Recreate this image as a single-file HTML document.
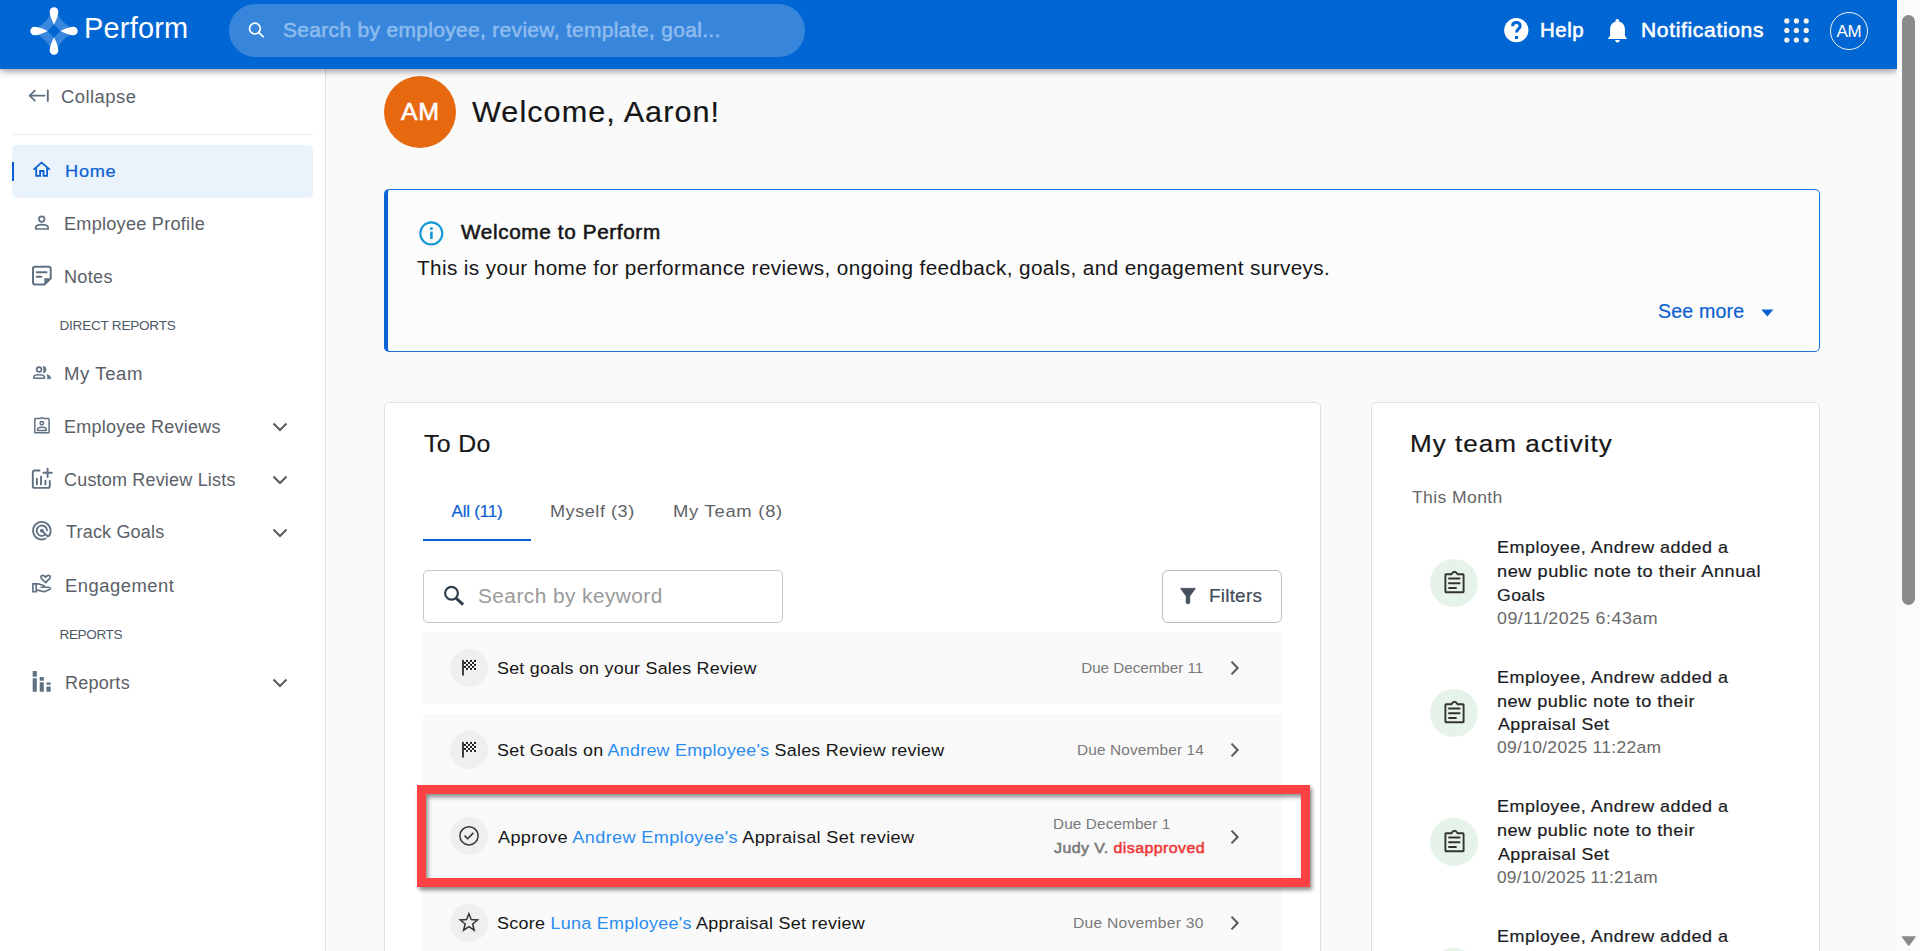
<!DOCTYPE html>
<html><head><meta charset="utf-8"><title>Perform</title>
<style>
html,body{margin:0;padding:0;width:1920px;height:951px;overflow:hidden;background:#fafafa;font-family:"Liberation Sans",sans-serif}
.a{position:absolute;box-sizing:border-box}
svg.a{overflow:visible}
.t{position:absolute;white-space:pre}
.m{-webkit-text-stroke:0.2px currentColor}
.sb{-webkit-text-stroke:0.55px currentColor}
</style></head><body>
<div class="a" style="left:0;top:0;width:326px;height:951px;background:#fff;border-right:1px solid #e2e2e2"></div>
<div class="a" style="left:12px;top:134px;width:301px;height:1px;background:#ececec"></div>
<div class="a" style="left:12px;top:145px;width:301px;height:53px;border-radius:5px;background:#eaf2fc"></div>
<div class="a" style="left:12px;top:162px;width:2px;height:19px;background:#0a60d0"></div>
<svg class="a" style="left:26px;top:84px" width="30" height="24" viewBox="26 84 30 24"><path d="M44.7 95.6 H29.8 M34.8 90.6 L29.6 95.6 L34.8 100.7" fill="none" stroke="#5f7082" stroke-width="1.8" stroke-linecap="round" stroke-linejoin="round"/><path d="M47.8 90.4 V101" stroke="#5f7082" stroke-width="1.9" stroke-linecap="round"/></svg><svg class="a" style="left:29px;top:158px" width="24" height="24" viewBox="29 158 24 24"><path d="M33.5 169.6 L41.6 162.6 L49.8 169.6" fill="none" stroke="#0a60d0" stroke-width="1.8" stroke-linejoin="miter"/><path d="M36.2 167.6 V175.9 H40.1 V171 H43.5 V175.9 H47.1 V167.6" fill="none" stroke="#0a60d0" stroke-width="1.8"/></svg><svg class="a" style="left:29px;top:211px" width="24" height="24" viewBox="29 211 24 24"><circle cx="41.75" cy="219.1" r="2.8" fill="none" stroke="#5f7082" stroke-width="1.7"/><path d="M35.7 229 V227.6 C35.7 225.6 38.6 224.7 41.8 224.7 C45 224.7 48.1 225.6 48.1 227.6 V229 Z" fill="none" stroke="#5f7082" stroke-width="1.7" stroke-linejoin="round"/></svg><svg class="a" style="left:29px;top:264px" width="26" height="26" viewBox="29 264 26 26"><path d="M35 266.8 H48.7 Q50.7 266.8 50.7 268.8 V278.4 L44.5 284.6 H35 Q33 284.6 33 282.6 V268.8 Q33 266.8 35 266.8Z" fill="none" stroke="#5f7082" stroke-width="2"/><path d="M44.3 278.2 H51.7 L44.3 285.6Z" fill="#5f7082"/><path d="M36.7 272.2 H46.6 M36.7 276.8 H41.3" stroke="#5f7082" stroke-width="2" stroke-linecap="round"/></svg><svg class="a" style="left:29px;top:361px" width="26" height="26" viewBox="29 361 26 26"><circle cx="39.1" cy="369.5" r="2.4" fill="none" stroke="#5f7082" stroke-width="1.7"/><path d="M43.3 366.2 A3.4 3.4 0 0 1 43.3 372.9 Q44.5 369.55 43.3 366.2Z" fill="#5f7082" stroke="#5f7082" stroke-width="0.7"/><path d="M33.8 378.2 V377 C33.8 375.5 36.3 374.8 39.2 374.8 C42.1 374.8 44.4 375.5 44.4 377 V378.2 Z" fill="none" stroke="#5f7082" stroke-width="1.6" stroke-linejoin="round"/><path d="M47 374.4 Q50.9 375.4 50.9 378.8 H47.4 Q47.6 376.4 47 374.4Z" fill="#5f7082" stroke="#5f7082" stroke-width="0.5"/></svg><svg class="a" style="left:29px;top:412px" width="26" height="26" viewBox="29 412 26 26"><path d="M35.6 418.6 H40.3 Q41.9 416.2 43.6 418.6 H48.3 Q49.1 418.6 49.1 419.4 V432 Q49.1 432.8 48.3 432.8 H35.6 Q34.8 432.8 34.8 432 V419.4 Q34.8 418.6 35.6 418.6Z" fill="none" stroke="#5f7082" stroke-width="1.5"/><circle cx="41.8" cy="423.3" r="1.7" fill="none" stroke="#5f7082" stroke-width="1.5"/><path d="M37.6 430.4 V429.2 C37.6 427.8 39.6 427.3 41.9 427.3 C44.2 427.3 46.2 427.8 46.2 429.2 V430.4 Z" fill="none" stroke="#5f7082" stroke-width="1.5" stroke-linejoin="round"/></svg><svg class="a" style="left:29px;top:466px" width="26" height="26" viewBox="29 466 26 26"><path d="M39.6 470.5 H34.8 Q32.8 470.5 32.8 472.5 V485.9 Q32.8 487.9 34.8 487.9 H47.8 Q49.8 487.9 49.8 485.9 V481" fill="none" stroke="#5f7082" stroke-width="1.9" stroke-linecap="round"/><path d="M36.9 478.7 V484.4 M41 476.6 V484.4 M45.4 480.6 V484.4 M47.6 468.6 V477 M43.4 472.8 H51.8" stroke="#5f7082" stroke-width="1.9" stroke-linecap="round"/></svg><svg class="a" style="left:29px;top:518px" width="26" height="26" viewBox="29 518 26 26"><path d="M46.23 538.28 A8.75 8.75 0 1 1 48.55 536.32" fill="none" stroke="#5f7082" stroke-width="1.9"/><path d="M45.52 534.38 A5.2 5.2 0 1 1 47.03 531.15" fill="none" stroke="#5f7082" stroke-width="1.9"/><circle cx="41.85" cy="530.7" r="1.9" fill="#5f7082"/><path d="M42.2 531 L48.4 537.2" stroke="#5f7082" stroke-width="1.9"/></svg><svg class="a" style="left:29px;top:571px" width="26" height="26" viewBox="29 571 26 26"><path d="M45.6 582.6 L41.6 578.6 C40.3 577.3 40.8 575.3 42.6 575.3 C43.8 575.3 44.9 576.2 45.6 577.3 C46.3 576.2 47.4 575.3 48.6 575.3 C50.4 575.3 50.9 577.3 49.6 578.6 Z" fill="none" stroke="#5f7082" stroke-width="1.7" stroke-linejoin="round"/><path d="M32.9 583.9 H36.2 V591.8 H32.9Z" fill="none" stroke="#5f7082" stroke-width="1.6"/><path d="M36.2 583.9 H38.8 L43.6 585.6 Q45.3 586.3 44.4 587.3 H40.6 M44.6 587.3 H48.2 Q50.2 587.3 50.4 589 L44.4 591.8 L36.2 589.9" fill="none" stroke="#5f7082" stroke-width="1.6" stroke-linejoin="round"/></svg><svg class="a" style="left:29px;top:669px" width="26" height="26" viewBox="29 669 26 26"><g fill="#5f7082"><rect x="32.7" y="671" width="4.1" height="5.7" rx="0.5"/><rect x="32.7" y="678.3" width="4.1" height="13.4" rx="0.5"/><rect x="39.7" y="676.9" width="4.1" height="3.9" rx="0.5"/><rect x="39.7" y="682.3" width="4.1" height="9.4" rx="0.5"/><rect x="46.5" y="682.4" width="4.2" height="2.3" rx="0.5"/><rect x="46.5" y="686.5" width="4.2" height="5.2" rx="0.5"/></g></svg>
<svg class="a" style="left:271.5px;top:420.9px" width="16" height="12" viewBox="0 0 16 12"><path d="M1.5 2.5 L8 9 L14.5 2.5" fill="none" stroke="#5b5b5b" stroke-width="2"/></svg><svg class="a" style="left:271.5px;top:473.7px" width="16" height="12" viewBox="0 0 16 12"><path d="M1.5 2.5 L8 9 L14.5 2.5" fill="none" stroke="#5b5b5b" stroke-width="2"/></svg><svg class="a" style="left:271.5px;top:526.7px" width="16" height="12" viewBox="0 0 16 12"><path d="M1.5 2.5 L8 9 L14.5 2.5" fill="none" stroke="#5b5b5b" stroke-width="2"/></svg><svg class="a" style="left:271.5px;top:677px" width="16" height="12" viewBox="0 0 16 12"><path d="M1.5 2.5 L8 9 L14.5 2.5" fill="none" stroke="#5b5b5b" stroke-width="2"/></svg>
<div class="a" style="left:384px;top:76px;width:72px;height:72px;border-radius:50%;background:#e7690f"></div>
<div class="a" style="left:384px;top:189px;width:1436px;height:163px;border:1px solid #1a70d8;border-left:4px solid #0a64d4;border-radius:5px;background:#fcfcfc"></div>
<div class="a" style="left:384px;top:402px;width:937px;height:700px;border:1px solid #e0e0e0;border-radius:5px;background:#fff"></div>
<div class="a" style="left:1371px;top:402px;width:449px;height:700px;border:1px solid #e0e0e0;border-radius:5px;background:#fff"></div>
<div class="a" style="left:423px;top:539px;width:108px;height:2px;background:#0a60d0"></div>
<div class="a" style="left:423px;top:570px;width:360px;height:53px;border:1px solid #c7c7c7;border-radius:5px;background:#fff"></div>
<div class="a" style="left:1162px;top:570px;width:120px;height:53px;border:1px solid #bdbdbd;border-radius:6px;background:#fff"></div>
<div class="a" style="left:423px;top:632px;width:859px;height:72px;background:#f9f9f9"></div>
<div class="a" style="left:423px;top:714px;width:859px;height:72px;background:#f9f9f9"></div>
<div class="a" style="left:423px;top:796px;width:859px;height:81px;background:#f9f9f9"></div>
<div class="a" style="left:423px;top:887px;width:859px;height:72px;background:#f9f9f9"></div>
<div class="a" style="left:450px;top:649px;width:38px;height:38px;border-radius:50%;background:#efefef"></div><div class="a" style="left:450px;top:730.6px;width:38px;height:38px;border-radius:50%;background:#efefef"></div><div class="a" style="left:450px;top:816.8px;width:38px;height:38px;border-radius:50%;background:#efefef"></div><div class="a" style="left:450px;top:903.6px;width:38px;height:38px;border-radius:50%;background:#efefef"></div>
<svg class="a" style="left:415px;top:217px" width="32" height="32" viewBox="415 217 32 32"><circle cx="431.3" cy="233.4" r="11" fill="none" stroke="#1497d4" stroke-width="2.1"/><rect x="430.1" y="231.6" width="2.6" height="7.4" fill="#1497d4"/><rect x="430.1" y="227.3" width="2.6" height="2.6" fill="#1497d4"/></svg><svg class="a" style="left:1758px;top:305px" width="18" height="14" viewBox="1758 305 18 14"><path d="M1761.3 309.6 H1773.4 L1767.35 316.4Z" fill="#0a60d0"/></svg><svg class="a" style="left:440px;top:582px" width="28" height="28" viewBox="440 582 28 28"><circle cx="451.5" cy="593.2" r="6.4" fill="none" stroke="#2f3d4c" stroke-width="2.2"/><path d="M456.3 598.3 L463.1 604.6" stroke="#2f3d4c" stroke-width="3" stroke-linecap="butt"/></svg><svg class="a" style="left:1176px;top:584px" width="24" height="24" viewBox="1176 584 24 24"><path d="M1180.4 588.3 H1195.6 L1189.8 596.2 V602.6 Q1189.8 603.8 1188 603.8 Q1186.1 603.8 1186.1 602.6 V596.2 Z" fill="#434f5b" stroke="#434f5b" stroke-width="0.6" stroke-linejoin="round"/></svg><svg class="a" style="left:457px;top:656.1px" width="24" height="24" viewBox="457 656.1 24 24"><rect x="463.6" y="659.80" width="12.6" height="10.3" fill="#fff"/><rect x="466" y="660.00" width="2" height="2" fill="#1a1a1a"/><rect x="470" y="660.00" width="2" height="2" fill="#1a1a1a"/><rect x="474" y="660.00" width="2" height="2" fill="#1a1a1a"/><rect x="464" y="662.00" width="2" height="2" fill="#1a1a1a"/><rect x="468" y="662.00" width="2" height="2" fill="#1a1a1a"/><rect x="472" y="662.00" width="2" height="2" fill="#1a1a1a"/><rect x="466" y="664.00" width="2" height="2" fill="#1a1a1a"/><rect x="470" y="664.00" width="2" height="2" fill="#1a1a1a"/><rect x="474" y="664.00" width="2" height="2" fill="#1a1a1a"/><rect x="464" y="666.00" width="2" height="2" fill="#1a1a1a"/><rect x="468" y="666.00" width="2" height="2" fill="#1a1a1a"/><rect x="472" y="666.00" width="2" height="2" fill="#1a1a1a"/><rect x="466" y="668.00" width="2" height="2" fill="#1a1a1a"/><rect x="470" y="668.00" width="2" height="2" fill="#1a1a1a"/><rect x="474" y="668.00" width="2" height="2" fill="#1a1a1a"/><rect x="462.1" y="660.00" width="1.8" height="15.6" fill="#2a2a2a"/></svg><svg class="a" style="left:457px;top:737.6px" width="24" height="24" viewBox="457 737.6 24 24"><rect x="463.6" y="741.30" width="12.6" height="10.3" fill="#fff"/><rect x="466" y="741.50" width="2" height="2" fill="#1a1a1a"/><rect x="470" y="741.50" width="2" height="2" fill="#1a1a1a"/><rect x="474" y="741.50" width="2" height="2" fill="#1a1a1a"/><rect x="464" y="743.50" width="2" height="2" fill="#1a1a1a"/><rect x="468" y="743.50" width="2" height="2" fill="#1a1a1a"/><rect x="472" y="743.50" width="2" height="2" fill="#1a1a1a"/><rect x="466" y="745.50" width="2" height="2" fill="#1a1a1a"/><rect x="470" y="745.50" width="2" height="2" fill="#1a1a1a"/><rect x="474" y="745.50" width="2" height="2" fill="#1a1a1a"/><rect x="464" y="747.50" width="2" height="2" fill="#1a1a1a"/><rect x="468" y="747.50" width="2" height="2" fill="#1a1a1a"/><rect x="472" y="747.50" width="2" height="2" fill="#1a1a1a"/><rect x="466" y="749.50" width="2" height="2" fill="#1a1a1a"/><rect x="470" y="749.50" width="2" height="2" fill="#1a1a1a"/><rect x="474" y="749.50" width="2" height="2" fill="#1a1a1a"/><rect x="462.1" y="741.50" width="1.8" height="15.6" fill="#2a2a2a"/></svg><svg class="a" style="left:457px;top:824px" width="24" height="24" viewBox="457 824 24 24"><circle cx="469" cy="835.8" r="9.1" fill="none" stroke="#333" stroke-width="1.5"/><path d="M464.6 835.6 L467.6 838.7 L473.4 832.9" fill="none" stroke="#333" stroke-width="1.6"/></svg><svg class="a" style="left:457px;top:910px" width="24" height="24" viewBox="457 910 24 24"><path d="M468.9 913.7 L471.2 919.6 L477.5 920 L472.6 924 L474.2 930.2 L468.9 926.7 L463.6 930.2 L465.2 924 L460.3 920 L466.6 919.6 Z" fill="none" stroke="#333" stroke-width="1.5" stroke-linejoin="miter"/></svg>
<svg class="a" style="left:1228.8px;top:660.4px" width="12" height="16" viewBox="0 0 12 16"><path d="M2.5 1.6 L8.6 8 L2.5 14.4" fill="none" stroke="#5b5b5b" stroke-width="2.1"/></svg><svg class="a" style="left:1228.8px;top:741.7px" width="12" height="16" viewBox="0 0 12 16"><path d="M2.5 1.6 L8.6 8 L2.5 14.4" fill="none" stroke="#5b5b5b" stroke-width="2.1"/></svg><svg class="a" style="left:1228.8px;top:828.6px" width="12" height="16" viewBox="0 0 12 16"><path d="M2.5 1.6 L8.6 8 L2.5 14.4" fill="none" stroke="#5b5b5b" stroke-width="2.1"/></svg><svg class="a" style="left:1228.8px;top:914.5px" width="12" height="16" viewBox="0 0 12 16"><path d="M2.5 1.6 L8.6 8 L2.5 14.4" fill="none" stroke="#5b5b5b" stroke-width="2.1"/></svg>
<div class="a" style="left:1430px;top:559px;width:48px;height:48px;border-radius:50%;background:#e6f3e8"></div><div class="a" style="left:1430px;top:688.8px;width:48px;height:48px;border-radius:50%;background:#e6f3e8"></div><div class="a" style="left:1430px;top:818px;width:48px;height:48px;border-radius:50%;background:#e6f3e8"></div><div class="a" style="left:1430px;top:947.5px;width:48px;height:48px;border-radius:50%;background:#e6f3e8"></div>
<svg class="a" style="left:1440px;top:568px" width="28" height="28" viewBox="1440 568 28 28"><path d="M1446 574.3 H1451.4 Q1454.5 569.2 1457.6 574.3 H1463 Q1463.6 574.3 1463.6 575 V591.6 Q1463.6 592.3 1463 592.3 H1446 Q1445.4 592.3 1445.4 591.6 V575 Q1445.4 574.3 1446 574.3Z" fill="none" stroke="#333" stroke-width="1.9"/><path d="M1449 578.5 H1459.6 M1449 583.3 H1459.6 M1449 588 H1456" stroke="#333" stroke-width="1.9" stroke-linecap="round"/></svg><svg class="a" style="left:1440px;top:697.8px" width="28" height="28" viewBox="1440 568 28 28"><path d="M1446 574.3 H1451.4 Q1454.5 569.2 1457.6 574.3 H1463 Q1463.6 574.3 1463.6 575 V591.6 Q1463.6 592.3 1463 592.3 H1446 Q1445.4 592.3 1445.4 591.6 V575 Q1445.4 574.3 1446 574.3Z" fill="none" stroke="#333" stroke-width="1.9"/><path d="M1449 578.5 H1459.6 M1449 583.3 H1459.6 M1449 588 H1456" stroke="#333" stroke-width="1.9" stroke-linecap="round"/></svg><svg class="a" style="left:1440px;top:827px" width="28" height="28" viewBox="1440 568 28 28"><path d="M1446 574.3 H1451.4 Q1454.5 569.2 1457.6 574.3 H1463 Q1463.6 574.3 1463.6 575 V591.6 Q1463.6 592.3 1463 592.3 H1446 Q1445.4 592.3 1445.4 591.6 V575 Q1445.4 574.3 1446 574.3Z" fill="none" stroke="#333" stroke-width="1.9"/><path d="M1449 578.5 H1459.6 M1449 583.3 H1459.6 M1449 588 H1456" stroke="#333" stroke-width="1.9" stroke-linecap="round"/></svg>
<div class="a" style="left:417px;top:785px;width:893px;height:102px;border:9px solid #fd4145;box-shadow:2px 3px 4px rgba(0,0,0,.45), inset 2px 3px 4px rgba(0,0,0,.45)"></div>
<div class="a" style="left:0;top:0;width:1897px;height:69px;background:#0066d3;box-shadow:0 2px 7px rgba(0,0,0,.42)"></div>
<div class="a" style="left:229px;top:4px;width:576px;height:53px;border-radius:27px;background:#3886dc"></div>
<svg class="a" style="left:26.1px;top:2.7px" width="56" height="56" viewBox="-28 -28 56 56">
<path d="M0,-23.7 Q-6.4,-6.4 -23.7,0 Q-6.4,6.4 0,23.7 Q6.4,6.4 23.7,0 Q6.4,-6.4 0,-23.7Z" fill="#3a88dd"/>
<path d="M0,-6.6 L-6.6,0 L0,6.6 L6.6,0Z" fill="#0066d3"/>
<g fill="#fff"><path d="M0,-6.4 C-1.9,-10.2 -4.3,-15.2 -4.3,-19.4 A4.3,4.3 0 0 1 4.3,-19.4 C4.3,-15.2 1.9,-10.2 0,-6.4Z"/><path d="M0,-6.4 C-1.9,-10.2 -4.3,-15.2 -4.3,-19.4 A4.3,4.3 0 0 1 4.3,-19.4 C4.3,-15.2 1.9,-10.2 0,-6.4Z" transform="rotate(90)"/><path d="M0,-6.4 C-1.9,-10.2 -4.3,-15.2 -4.3,-19.4 A4.3,4.3 0 0 1 4.3,-19.4 C4.3,-15.2 1.9,-10.2 0,-6.4Z" transform="rotate(180)"/><path d="M0,-6.4 C-1.9,-10.2 -4.3,-15.2 -4.3,-19.4 A4.3,4.3 0 0 1 4.3,-19.4 C4.3,-15.2 1.9,-10.2 0,-6.4Z" transform="rotate(270)"/></g>
</svg>
<svg class="a" style="left:244px;top:18px" width="24" height="24" viewBox="244 18 24 24"><circle cx="254.9" cy="28.6" r="5.4" fill="none" stroke="#fff" stroke-width="1.7"/><path d="M258.9 32.6 L263 36.7" stroke="#fff" stroke-width="1.8" stroke-linecap="round"/></svg><svg class="a" style="left:1500px;top:14px" width="32" height="32" viewBox="0 0 32 32"><circle cx="16.3" cy="16.2" r="12.1" fill="#fff"/><path d="M12.6 12.2 C12.6 9.8 14.3 8.6 16.4 8.6 C18.6 8.6 20.1 10 20.1 11.9 C20.1 14.6 16.5 15.2 16.5 18.6" fill="none" stroke="#0066d3" stroke-width="3"/><rect x="15" y="22" width="3" height="3" fill="#0066d3"/></svg><svg class="a" style="left:1602px;top:14px" width="32" height="32" viewBox="0 0 32 32"><circle cx="15.3" cy="7" r="1.9" fill="#fff"/><path d="M8.1 21.8 L8.1 15 C8.1 10.6 11.1 7.6 15.4 7.6 C19.7 7.6 22.9 10.6 22.9 15 L22.9 21.8 L25.1 24.9 L5.7 24.9 Z" fill="#fff"/><path d="M13 26.1 L18 26.1 Q17.3 28.6 15.5 28.6 Q13.7 28.6 13 26.1Z" fill="#fff"/></svg><svg class="a" style="left:1776px;top:10px" width="40" height="40" viewBox="1776 10 40 40"><circle cx="1786.8" cy="20.9" r="2.6" fill="#f4f1ee"/><circle cx="1786.8" cy="30.4" r="2.6" fill="#f4f1ee"/><circle cx="1786.8" cy="40" r="2.6" fill="#f4f1ee"/><circle cx="1796.4" cy="20.9" r="2.6" fill="#f4f1ee"/><circle cx="1796.4" cy="30.4" r="2.6" fill="#f4f1ee"/><circle cx="1796.4" cy="40" r="2.6" fill="#f4f1ee"/><circle cx="1806.2" cy="20.9" r="2.6" fill="#f4f1ee"/><circle cx="1806.2" cy="30.4" r="2.6" fill="#f4f1ee"/><circle cx="1806.2" cy="40" r="2.6" fill="#f4f1ee"/></svg><div class="a" style="left:1830px;top:12px;width:38px;height:38px;border:1.3px solid #f2f2f2;border-radius:50%"></div>
<div class="a" style="left:1897px;top:0;width:23px;height:951px;background:#fbfbfb"></div>
<div class="a" style="left:1902px;top:15px;width:13px;height:590px;border-radius:6.5px;background:#8a8a8a"></div>
<svg class="a" style="left:1898px;top:932px" width="20" height="16" viewBox="0 0 20 16"><path d="M4.2 4.2 H17.3 Q18.3 4.2 17.7 5.1 L11.6 13.3 Q10.75 14.3 9.9 13.3 L3.8 5.1 Q3.2 4.2 4.2 4.2Z" fill="#8a8a8a"/></svg>
<div class="t" id="logo" style="left:83.58px;top:14.40px;font-size:28.6px;line-height:28.6px;font-weight:400;letter-spacing:0.198px;transform:scaleX(1.0122);transform-origin:0 0;color:#fff">Perform</div>
<div class="t sb" id="hsearch" style="left:282.72px;top:20.00px;font-size:20.3px;line-height:20.3px;font-weight:400;letter-spacing:0.308px;transform:scaleX(1.0344);transform-origin:0 0;color:#8dbbee">Search by employee, review, template, goal...</div>
<div class="t sb" id="help" style="left:1539.96px;top:20.80px;font-size:19.6px;line-height:19.6px;font-weight:400;letter-spacing:0.512px;transform:scaleX(1.0410);transform-origin:0 0;color:#fff">Help</div>
<div class="t sb" id="notif" style="left:1640.53px;top:20.80px;font-size:19.6px;line-height:19.6px;font-weight:400;letter-spacing:0.605px;transform:scaleX(1.0743);transform-origin:0 0;color:#fff">Notifications</div>
<div class="t" id="ham" style="left:1836.50px;top:22.70px;font-size:17px;line-height:17px;font-weight:400;letter-spacing:-0.300px;color:#fff">AM</div>
<div class="t" id="collapse" style="left:60.75px;top:89.00px;font-size:17.6px;line-height:17.6px;font-weight:400;letter-spacing:0.436px;transform:scaleX(1.0478);transform-origin:0 0;color:#5b6068">Collapse</div>
<div class="t m" id="home" style="left:64.65px;top:163.00px;font-size:17.4px;line-height:17.4px;font-weight:400;letter-spacing:0.684px;transform:scaleX(1.0478);transform-origin:0 0;color:#0a60d0">Home</div>
<div class="t" id="emp" style="left:64.47px;top:216.30px;font-size:17.6px;line-height:17.6px;font-weight:400;letter-spacing:0.249px;transform:scaleX(1.0294);transform-origin:0 0;color:#5b6068">Employee Profile</div>
<div class="t" id="notes" style="left:64.47px;top:269.10px;font-size:17.6px;line-height:17.6px;font-weight:400;letter-spacing:0.304px;transform:scaleX(1.0278);transform-origin:0 0;color:#5b6068">Notes</div>
<div class="t" id="direct" style="left:59.50px;top:319.00px;font-size:13.6px;line-height:13.6px;font-weight:400;letter-spacing:-0.254px;color:#4e5966">DIRECT REPORTS</div>
<div class="t" id="myteam" style="left:64.35px;top:366.20px;font-size:17.6px;line-height:17.6px;font-weight:400;letter-spacing:0.578px;transform:scaleX(1.0529);transform-origin:0 0;color:#5b6068">My Team</div>
<div class="t" id="emprev" style="left:64.38px;top:419.10px;font-size:17.6px;line-height:17.6px;font-weight:400;letter-spacing:0.222px;transform:scaleX(1.0230);transform-origin:0 0;color:#5b6068">Employee Reviews</div>
<div class="t" id="custom" style="left:64.38px;top:471.90px;font-size:17.6px;line-height:17.6px;font-weight:400;letter-spacing:0.193px;transform:scaleX(1.0218);transform-origin:0 0;color:#5b6068">Custom Review Lists</div>
<div class="t" id="track" style="left:66.00px;top:524.00px;font-size:17.6px;line-height:17.6px;font-weight:400;letter-spacing:0.196px;transform:scaleX(1.0213);transform-origin:0 0;color:#5b6068">Track Goals</div>
<div class="t" id="engage" style="left:64.95px;top:577.60px;font-size:17.6px;line-height:17.6px;font-weight:400;letter-spacing:0.478px;transform:scaleX(1.0455);transform-origin:0 0;color:#5b6068">Engagement</div>
<div class="t" id="reportsh" style="left:59.60px;top:628.00px;font-size:13.6px;line-height:13.6px;font-weight:400;letter-spacing:-0.433px;color:#4e5966">REPORTS</div>
<div class="t" id="reports" style="left:64.97px;top:675.00px;font-size:17.6px;line-height:17.6px;font-weight:400;letter-spacing:0.244px;transform:scaleX(1.0250);transform-origin:0 0;color:#5b6068">Reports</div>
<div class="t sb" id="bigam" style="left:401.25px;top:100.25px;font-size:24.5px;line-height:24.5px;font-weight:400;letter-spacing:0.566px;transform:scaleX(1.0164);transform-origin:0 0;color:#fff">AM</div>
<div class="t m" id="welcome" style="left:471.60px;top:97.60px;font-size:28.6px;line-height:28.6px;font-weight:400;letter-spacing:0.991px;transform:scaleX(1.0690);transform-origin:0 0;color:#161616">Welcome, Aaron!</div>
<div class="t sb" id="wtp" style="left:460.90px;top:222.90px;font-size:19.5px;line-height:19.5px;font-weight:400;letter-spacing:0.601px;transform:scaleX(1.0616);transform-origin:0 0;color:#161616">Welcome to Perform</div>
<div class="t" id="body" style="left:417.30px;top:258.80px;font-size:19.9px;line-height:19.9px;font-weight:400;letter-spacing:0.375px;transform:scaleX(1.0418);transform-origin:0 0;color:#161616">This is your home for performance reviews, ongoing feedback, goals, and engagement surveys.</div>
<div class="t m" id="seemore" style="left:1657.68px;top:302.20px;font-size:19.3px;line-height:19.3px;font-weight:400;letter-spacing:0.183px;transform:scaleX(1.0159);transform-origin:0 0;color:#0a60d0">See more</div>
<div class="t m" id="todo" style="left:424.00px;top:431.80px;font-size:24.3px;line-height:24.3px;font-weight:400;letter-spacing:0.354px;transform:scaleX(1.0230);transform-origin:0 0;color:#161616">To Do</div>
<div class="t m" id="all" style="left:451.60px;top:502.70px;font-size:17px;line-height:17px;font-weight:400;letter-spacing:-0.214px;color:#0a60d0">All (11)</div>
<div class="t" id="myself" style="left:550.13px;top:502.70px;font-size:17px;line-height:17px;font-weight:400;letter-spacing:0.496px;transform:scaleX(1.0651);transform-origin:0 0;color:#5f6266">Myself (3)</div>
<div class="t" id="myteam8" style="left:673.22px;top:502.70px;font-size:17px;line-height:17px;font-weight:400;letter-spacing:0.689px;transform:scaleX(1.0810);transform-origin:0 0;color:#5f6266">My Team (8)</div>
<div class="t" id="kw" style="left:478.26px;top:586.10px;font-size:20px;line-height:20px;font-weight:400;letter-spacing:0.423px;transform:scaleX(1.0420);transform-origin:0 0;color:#9a9a9a">Search by keyword</div>
<div class="t m" id="filters" style="left:1209.47px;top:586.70px;font-size:18.5px;line-height:18.5px;font-weight:400;letter-spacing:0.203px;transform:scaleX(1.0255);transform-origin:0 0;color:#3f4b58">Filters</div>
<div class="t" id="it1" style="left:496.97px;top:660.10px;font-size:17.4px;line-height:17.4px;font-weight:400;letter-spacing:0.233px;transform:scaleX(1.0284);transform-origin:0 0;color:#161616">Set goals on your Sales Review</div>
<div class="t" id="it2" style="left:496.97px;top:741.80px;font-size:17.4px;line-height:17.4px;font-weight:400;letter-spacing:0.240px;transform:scaleX(1.0287);transform-origin:0 0;color:#161616">Set Goals on <span style='color:#2a8cf0'>Andrew Employee's</span> Sales Review review</div>
<div class="t" id="it3" style="left:498.00px;top:829.00px;font-size:17.4px;line-height:17.4px;font-weight:400;letter-spacing:0.340px;transform:scaleX(1.0415);transform-origin:0 0;color:#161616">Approve <span style='color:#2a8cf0'>Andrew Employee's</span> Appraisal Set review</div>
<div class="t" id="it4" style="left:496.97px;top:914.90px;font-size:17.4px;line-height:17.4px;font-weight:400;letter-spacing:0.263px;transform:scaleX(1.0323);transform-origin:0 0;color:#161616">Score <span style='color:#2a8cf0'>Luna Employee's</span> Appraisal Set review</div>
<div class="t" id="due1" style="left:1081.20px;top:660.30px;font-size:15.2px;line-height:15.2px;font-weight:400;letter-spacing:0.000px;color:#7a7a7a">Due December 11</div>
<div class="t" id="due2" style="left:1076.59px;top:742.20px;font-size:15.2px;line-height:15.2px;font-weight:400;letter-spacing:0.127px;transform:scaleX(1.0148);transform-origin:0 0;color:#7a7a7a">Due November 14</div>
<div class="t" id="due3" style="left:1052.89px;top:816.40px;font-size:15.2px;line-height:15.2px;font-weight:400;letter-spacing:0.095px;transform:scaleX(1.0111);transform-origin:0 0;color:#7a7a7a">Due December 1</div>
<div class="t sb" id="judy" style="left:1053.90px;top:840.20px;font-size:15.2px;line-height:15.2px;font-weight:400;letter-spacing:0.380px;transform:scaleX(1.0533);transform-origin:0 0;color:#7a7a7a">Judy V. <span style='color:#ef3a3c'>disapproved</span></div>
<div class="t" id="due4" style="left:1073.17px;top:914.50px;font-size:15.2px;line-height:15.2px;font-weight:400;letter-spacing:0.246px;transform:scaleX(1.0291);transform-origin:0 0;color:#7a7a7a">Due November 30</div>
<div class="t m" id="mta" style="left:1409.53px;top:431.90px;font-size:24.0px;line-height:24.0px;font-weight:400;letter-spacing:0.910px;transform:scaleX(1.0874);transform-origin:0 0;color:#161616">My team activity</div>
<div class="t" id="month" style="left:1411.70px;top:490.00px;font-size:16.9px;line-height:16.9px;font-weight:400;letter-spacing:0.363px;transform:scaleX(1.0410);transform-origin:0 0;color:#666">This Month</div>
<div class="t m" id="act0_0" style="left:1497.34px;top:539.40px;font-size:17px;line-height:17px;font-weight:400;letter-spacing:0.474px;transform:scaleX(1.0556);transform-origin:0 0;color:#1c1c24">Employee, Andrew added a</div>
<div class="t m" id="act0_1" style="left:1497.33px;top:563.10px;font-size:17px;line-height:17px;font-weight:400;letter-spacing:0.497px;transform:scaleX(1.0693);transform-origin:0 0;color:#1c1c24">new public note to their Annual</div>
<div class="t m" id="act0_2" style="left:1497.36px;top:586.80px;font-size:17px;line-height:17px;font-weight:400;letter-spacing:0.397px;transform:scaleX(1.0384);transform-origin:0 0;color:#1c1c24">Goals</div>
<div class="t" id="act0_d" style="left:1497.34px;top:610.90px;font-size:16.9px;line-height:16.9px;font-weight:400;letter-spacing:0.479px;transform:scaleX(1.0570);transform-origin:0 0;color:#686868">09/11/2025 6:43am</div>
<div class="t m" id="act1_0" style="left:1497.34px;top:668.90px;font-size:17px;line-height:17px;font-weight:400;letter-spacing:0.474px;transform:scaleX(1.0556);transform-origin:0 0;color:#1c1c24">Employee, Andrew added a</div>
<div class="t m" id="act1_1" style="left:1497.34px;top:692.60px;font-size:17px;line-height:17px;font-weight:400;letter-spacing:0.461px;transform:scaleX(1.0649);transform-origin:0 0;color:#1c1c24">new public note to their</div>
<div class="t m" id="act1_2" style="left:1498.40px;top:716.30px;font-size:17px;line-height:17px;font-weight:400;letter-spacing:0.393px;transform:scaleX(1.0490);transform-origin:0 0;color:#1c1c24">Appraisal Set</div>
<div class="t" id="act1_d" style="left:1497.37px;top:740.40px;font-size:16.9px;line-height:16.9px;font-weight:400;letter-spacing:0.293px;transform:scaleX(1.0339);transform-origin:0 0;color:#686868">09/10/2025 11:22am</div>
<div class="t m" id="act2_0" style="left:1497.34px;top:798.40px;font-size:17px;line-height:17px;font-weight:400;letter-spacing:0.474px;transform:scaleX(1.0556);transform-origin:0 0;color:#1c1c24">Employee, Andrew added a</div>
<div class="t m" id="act2_1" style="left:1497.34px;top:822.10px;font-size:17px;line-height:17px;font-weight:400;letter-spacing:0.461px;transform:scaleX(1.0649);transform-origin:0 0;color:#1c1c24">new public note to their</div>
<div class="t m" id="act2_2" style="left:1498.40px;top:845.80px;font-size:17px;line-height:17px;font-weight:400;letter-spacing:0.393px;transform:scaleX(1.0490);transform-origin:0 0;color:#1c1c24">Appraisal Set</div>
<div class="t" id="act2_d" style="left:1497.38px;top:869.90px;font-size:16.9px;line-height:16.9px;font-weight:400;letter-spacing:0.201px;transform:scaleX(1.0230);transform-origin:0 0;color:#686868">09/10/2025 11:21am</div>
<div class="t m" id="act3_0" style="left:1497.34px;top:927.90px;font-size:17px;line-height:17px;font-weight:400;letter-spacing:0.474px;transform:scaleX(1.0556);transform-origin:0 0;color:#1c1c24">Employee, Andrew added a</div>
</body></html>
